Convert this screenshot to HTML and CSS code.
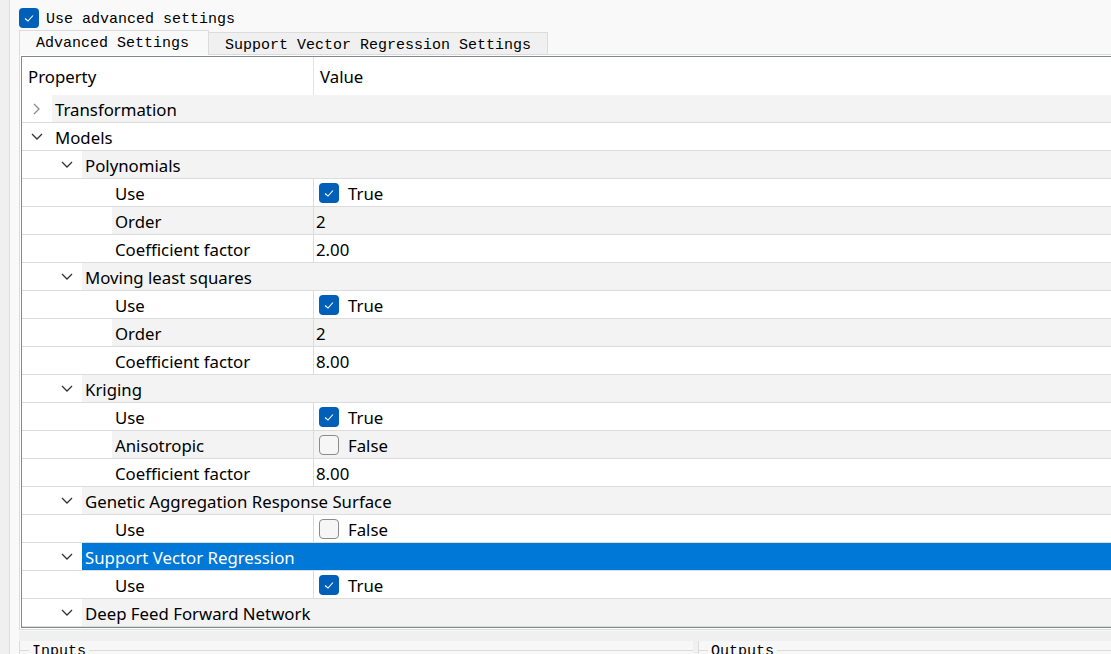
FILE: index.html
```html
<!DOCTYPE html>
<html>
<head>
<meta charset="utf-8">
<link rel="stylesheet" href="styles.css">
</head>
<body>
<div class="app">
  <div class="sidebar"></div>
  <div class="main">
    <div class="adv">
      <span class="cb on"><svg viewBox="0 0 20 20" width="20" height="20"><polyline points="6,10.5 9,13 14,7.5" fill="none" stroke="#fff" stroke-width="1.1"/></svg></span>
      <span class="mono">Use advanced settings</span>
    </div>
    <div class="tabs">
      <div class="tab active mono">Advanced Settings</div>
      <div class="tab mono">Support Vector Regression Settings</div>
    </div>
    <div class="pane">
      <div class="tree">
        <div class="hdr"><div class="h1">Property</div><div class="h2">Value</div></div>

        <div class="row alt group"><div class="name"><span class="branch d1"><svg class="ch-r" viewBox="0 0 7 12" width="7" height="12"><polyline points="1,1 6,6 1,11" fill="none" stroke="#8c8c8c" stroke-width="1.3"/></svg></span><span class="label">Transformation</span></div></div>
        <div class="row group"><div class="name"><span class="branch d1"><svg class="ch-d" viewBox="0 0 12 7" width="12" height="7"><polyline points="1,1 6,6 11,1" fill="none" stroke="#333" stroke-width="1.3"/></svg></span><span class="label">Models</span></div></div>

        <div class="row alt group"><div class="name"><span class="branch d2"><svg class="ch-d" viewBox="0 0 12 7" width="12" height="7"><polyline points="1,1 6,6 11,1" fill="none" stroke="#333" stroke-width="1.3"/></svg></span><span class="label">Polynomials</span></div></div>
        <div class="row leaf"><div class="name"><span class="branch d3"></span><span class="label">Use</span></div><div class="val"><span class="cb on"><svg viewBox="0 0 20 20" width="20" height="20"><polyline points="6,10.5 9,13 14,7.5" fill="none" stroke="#fff" stroke-width="1.1"/></svg></span>True</div></div>
        <div class="row alt leaf"><div class="name"><span class="branch d3"></span><span class="label">Order</span></div><div class="val">2</div></div>
        <div class="row leaf"><div class="name"><span class="branch d3"></span><span class="label">Coefficient factor</span></div><div class="val">2.00</div></div>

        <div class="row alt group"><div class="name"><span class="branch d2"><svg class="ch-d" viewBox="0 0 12 7" width="12" height="7"><polyline points="1,1 6,6 11,1" fill="none" stroke="#333" stroke-width="1.3"/></svg></span><span class="label">Moving least squares</span></div></div>
        <div class="row leaf"><div class="name"><span class="branch d3"></span><span class="label">Use</span></div><div class="val"><span class="cb on"><svg viewBox="0 0 20 20" width="20" height="20"><polyline points="6,10.5 9,13 14,7.5" fill="none" stroke="#fff" stroke-width="1.1"/></svg></span>True</div></div>
        <div class="row alt leaf"><div class="name"><span class="branch d3"></span><span class="label">Order</span></div><div class="val">2</div></div>
        <div class="row leaf"><div class="name"><span class="branch d3"></span><span class="label">Coefficient factor</span></div><div class="val">8.00</div></div>

        <div class="row alt group"><div class="name"><span class="branch d2"><svg class="ch-d" viewBox="0 0 12 7" width="12" height="7"><polyline points="1,1 6,6 11,1" fill="none" stroke="#333" stroke-width="1.3"/></svg></span><span class="label">Kriging</span></div></div>
        <div class="row leaf"><div class="name"><span class="branch d3"></span><span class="label">Use</span></div><div class="val"><span class="cb on"><svg viewBox="0 0 20 20" width="20" height="20"><polyline points="6,10.5 9,13 14,7.5" fill="none" stroke="#fff" stroke-width="1.1"/></svg></span>True</div></div>
        <div class="row alt leaf"><div class="name"><span class="branch d3"></span><span class="label">Anisotropic</span></div><div class="val"><span class="cb off"></span>False</div></div>
        <div class="row leaf"><div class="name"><span class="branch d3"></span><span class="label">Coefficient factor</span></div><div class="val">8.00</div></div>

        <div class="row alt group"><div class="name"><span class="branch d2"><svg class="ch-d" viewBox="0 0 12 7" width="12" height="7"><polyline points="1,1 6,6 11,1" fill="none" stroke="#333" stroke-width="1.3"/></svg></span><span class="label">Genetic Aggregation Response Surface</span></div></div>
        <div class="row leaf"><div class="name"><span class="branch d3"></span><span class="label">Use</span></div><div class="val"><span class="cb off"></span>False</div></div>

        <div class="row sel group"><div class="name"><span class="branch d2"><svg class="ch-d" viewBox="0 0 12 7" width="12" height="7"><polyline points="1,1 6,6 11,1" fill="none" stroke="#333" stroke-width="1.3"/></svg></span><span class="label">Support Vector Regression</span></div></div>
        <div class="row leaf"><div class="name"><span class="branch d3"></span><span class="label">Use</span></div><div class="val"><span class="cb on"><svg viewBox="0 0 20 20" width="20" height="20"><polyline points="6,10.5 9,13 14,7.5" fill="none" stroke="#fff" stroke-width="1.1"/></svg></span>True</div></div>

        <div class="row alt group"><div class="name"><span class="branch d2"><svg class="ch-d" viewBox="0 0 12 7" width="12" height="7"><polyline points="1,1 6,6 11,1" fill="none" stroke="#333" stroke-width="1.3"/></svg></span><span class="label">Deep Feed Forward Network</span></div></div>
      </div>
    </div>
    <div class="lower">
      <div class="grp left"><span class="gtitle mono">Inputs</span></div>
      <div class="splitter"></div>
      <div class="grp right"><span class="gtitle mono">Outputs</span></div>
    </div>
  </div>
</div>
</body>
</html>
```

FILE: styles.css
```css
html, body {
  margin: 0;
  padding: 0;
}
body {
  width: 1111px;
  height: 654px;
  overflow: hidden;
  background: #f9f9f9;
  font-family: "Noto Sans", "Open Sans", sans-serif;
  color: #000;
}
.app {
  display: flex;
  height: 654px;
}
.sidebar {
  flex: none;
  width: 9px;
  background: #f0f0f0;
  border-right: 1px solid #dedede;
}
.main {
  flex: 1;
  min-width: 0;
  padding-left: 9px;
}
.mono {
  font-family: "Liberation Mono", "DejaVu Sans Mono", monospace;
  font-size: 15px;
}
.adv {
  display: flex;
  align-items: center;
  gap: 7px;
  height: 20px;
  margin-top: 8px;
}
.adv .mono {
  padding-top: 2px;
}
.cb {
  flex: none;
  display: inline-block;
  width: 20px;
  height: 20px;
  box-sizing: border-box;
  border-radius: 4px;
}
.cb svg { display: block; }
.cb.on {
  background: #005fb8;
}
.cb.off {
  background: #f6f6f6;
  border: 1px solid #8b8b8b;
}
.tabs {
  display: flex;
  align-items: flex-end;
  height: 24px;
  margin-top: 2px;
}
.tab {
  box-sizing: border-box;
  display: flex;
  align-items: center;
  border: 1px solid #dcdcdc;
  border-bottom: none;
}
.tab.active {
  width: 190px;
  height: 25px;
  padding-left: 16px;
  padding-top: 1px;
  background: #f9f9f9;
  margin-bottom: -1px;
  position: relative;
  z-index: 1;
}
.tab:not(.active) {
  width: 339px;
  height: 22px;
  padding-left: 16px;
  padding-top: 4px;
  background: #f0f0f0;
  border-left: none;
}
.pane {
  border: 1px solid #dcdcdc;
  border-right: none;
  padding: 1px 0 1px 1px;
  background: #fff;
  margin-right: -20px;
}
.tree {
  border: 1px solid #828790;
  border-right: none;
  background: #fff;
  font-size: 16.8px;
}
.hdr {
  display: flex;
  height: 38px;
  align-items: center;
}
.h1 {
  box-sizing: border-box;
  width: 292px;
  height: 100%;
  display: flex;
  align-items: center;
  padding-left: 6px;
  border-right: 1px solid #e3e3e3;
}
.h2 {
  padding-left: 6px;
}
.row {
  display: flex;
  height: 27px;
  border-bottom: 1px solid #dcdcdc;
}
.name {
  display: flex;
  height: 100%;
}
.row.group .name {
  flex: 1;
}
.row.leaf .name {
  box-sizing: border-box;
  width: 292px;
  border-right: 1px solid #dcdcdc;
}
.branch {
  flex: none;
  height: 100%;
  display: flex;
  align-items: center;
  justify-content: flex-end;
}
.branch svg {
  display: block;
}
.branch .ch-d { margin-right: 9px; }
.branch .ch-r { margin-right: 12px; }
.d1 { width: 30px; }
.d2 { width: 60px; }
.d3 { width: 90px; }
.label {
  flex: 1;
  display: flex;
  align-items: center;
  padding-left: 3px;
  padding-top: 1px;
  white-space: nowrap;
}
.val {
  flex: 1;
  display: flex;
  align-items: center;
  padding-left: 2px;
  padding-top: 1px;
  gap: 9px;
}
.val .cb {
  margin-left: 3px;
  margin-top: -1px;
}
.row.alt .label,
.row.alt .val {
  background: #f3f3f3;
}
.row.sel .label {
  background: #0078d7;
  color: #fff;
}
.lower {
  display: flex;
  margin-top: 1px;
  height: 40px;
  background: #f0f0f0;
  padding-top: 10px;
  box-sizing: border-box;
  margin-right: -20px;
}
.grp {
  box-sizing: border-box;
  height: 40px;
  background: #f7f7f7;
  border-left: 1px solid #dcdcdc;
  position: relative;
}
.grp.left {
  width: 674px;
}
.grp.right {
  flex: 1;
}
.grp::before {
  content: "";
  position: absolute;
  left: 0;
  right: 0;
  top: 9px;
  border-top: 1px solid #dcdcdc;
}
.gtitle {
  position: relative;
  top: -3px;
  z-index: 1;
  display: inline-block;
  margin-left: 9px;
  padding: 0 3px;
  background: #f7f7f7;
  line-height: 18px;
}
.splitter {
  width: 5px;
  flex: none;
}
```
